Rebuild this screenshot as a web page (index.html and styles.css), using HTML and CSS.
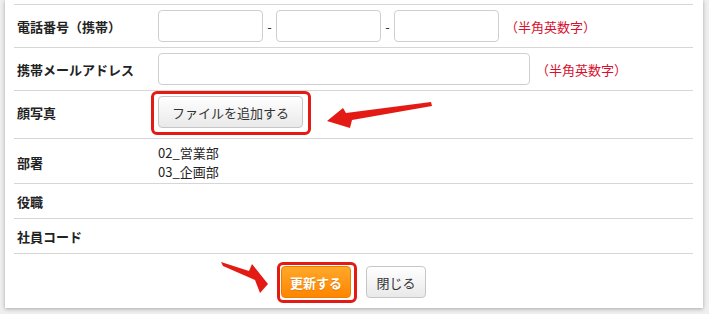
FILE: index.html
```html
<!DOCTYPE html>
<html lang="ja">
<head>
    <meta charset="UTF-8">
    <meta name="viewport" content="width=device-width, initial-scale=1.0">
    <title>社員情報の編集</title>
    <link rel="stylesheet" href="styles.css">
</head>
<body>
    <div class="modal">
        <div class="row">
            <div class="label">電話番号（携帯）</div>
            <div class="field">
                <input type="text" class="input-box short">
                <span class="dash">-</span>
                <input type="text" class="input-box short">
                <span class="dash">-</span>
                <input type="text" class="input-box short">
                <span class="note">（半角英数字）</span>
            </div>
        </div>
        <div class="row">
            <div class="label">携帯メールアドレス</div>
            <div class="field">
                <input type="text" class="input-box wide">
                <span class="note">（半角英数字）</span>
            </div>
        </div>
        <div class="row photo-row">
            <div class="label">顔写真</div>
            <div class="field">
                <span class="marked">
                    <button class="btn">ファイルを追加する</button>
                    <span class="mark mark-file"></span>
                </span>
            </div>
        </div>
        <div class="row dept-row">
            <div class="label">部署</div>
            <div class="field dept-list">
                <div>02_営業部</div>
                <div>03_企画部</div>
            </div>
        </div>
        <div class="row small-row">
            <div class="label">役職</div>
            <div class="field"></div>
        </div>
        <div class="row small-row">
            <div class="label">社員コード</div>
            <div class="field"></div>
        </div>
        <div class="footer">
            <span class="marked">
                <button class="btn btn-primary">更新する</button>
                <span class="mark mark-save"></span>
            </span>
            <button class="btn btn-close">閉じる</button>
        </div>

        <!-- 注釈の矢印 -->
        <svg class="arrows" width="709" height="314" viewBox="0 0 709 314">
            <polygon points="327,121 343,108 346,113 431,102 432,106 352,120 350,128" />
            <polygon points="221,262 249,271 252,264 268,284 260,293 255,280 223,266" />
        </svg>
    </div>
</body>
</html>
```

FILE: styles.css
```css
body {
    font-family: "Noto Sans CJK JP", "Noto Sans", sans-serif;
    font-size: 13px;
    color: #222;
    margin: 0;
    padding: 0;
    background-color: #efefef;
    height: 314px;
    overflow: hidden;
}

.modal {
    position: relative;
    margin-left: 5px;
    width: 698px;
    padding: 4px 10px 0 9px;
    box-sizing: border-box;
    background-color: #fff;
    box-shadow: 0 1px 4px rgba(0, 0, 0, 0.3);
}

.row {
    display: flex;
    align-items: center;
    border-top: 1px solid #d6d6d6;
    padding: 5px 0;
}

.label {
    width: 141px;
    padding-left: 3px;
    font-weight: bold;
    line-height: 17px;
}

.field {
    display: flex;
    align-items: center;
}

.input-box {
    height: 32px;
    box-sizing: border-box;
    border: 1px solid #cfcfcf;
    border-radius: 4px;
    padding: 4px 6px;
    font-size: 13px;
    margin: 0;
}

.short {
    width: 105px;
}

.wide {
    width: 372px;
}

.dash {
    width: 13px;
    text-align: center;
    color: #333;
}

.note {
    margin-left: 6px;
    color: #d8102f;
}

.photo-row {
    padding: 5px 0 10px;
}

.dept-row {
    padding: 4px 0 2px;
}

.dept-list {
    display: block;
    line-height: 19px;
    color: #222;
}

.small-row {
    height: 34px;
    padding: 0;
}

.btn {
    height: 32px;
    box-sizing: border-box;
    padding: 0 13px;
    font-family: inherit;
    font-size: 13px;
    color: #333;
    background: linear-gradient(#ffffff, #e9e9e9);
    border: 1px solid #c6c6c6;
    border-radius: 4px;
    display: block;
}

.btn-primary {
    width: 70px;
    padding: 0;
    color: #fff;
    font-weight: bold;
    background: linear-gradient(#ffa82a, #ff8500);
    border-color: #e98100;
    text-shadow: 0 1px 1px rgba(150, 70, 0, 0.3);
}

.btn-close {
    width: 60px;
    padding: 0;
    margin-left: 15px;
}

.marked {
    position: relative;
    display: inline-block;
}

.mark {
    position: absolute;
    border: 3px solid #e31b14;
    border-radius: 6px;
    pointer-events: none;
}

.mark-file {
    top: -5px;
    left: -7px;
    right: -8px;
    bottom: -7px;
}

.mark-save {
    top: -4px;
    left: -4px;
    right: -6px;
    bottom: -5px;
}

.footer {
    display: flex;
    justify-content: center;
    border-top: 1px solid #d6d6d6;
    padding: 12px 0 10px;
}

.arrows {
    position: absolute;
    top: 0;
    left: -5px;
    pointer-events: none;
}

.arrows polygon {
    fill: #e31b14;
}
```
